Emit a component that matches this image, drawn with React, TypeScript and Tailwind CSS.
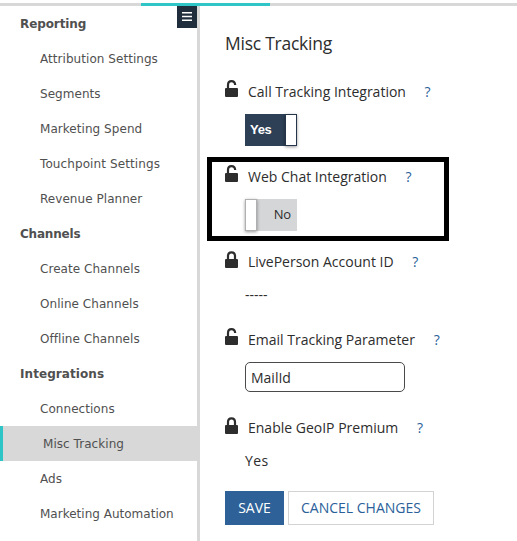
import React from "react";

type NavItem = { label: string; kind: "heading" | "link" | "active"; spacing?: string };

const navItems: NavItem[] = [
  { label: "Reporting", kind: "heading", spacing: "tracking-[-0.1px]" },
  { label: "Attribution Settings", kind: "link" },
  { label: "Segments", kind: "link" },
  { label: "Marketing Spend", kind: "link" },
  { label: "Touchpoint Settings", kind: "link", spacing: "tracking-[0.1px]" },
  { label: "Revenue Planner", kind: "link" },
  { label: "Channels", kind: "heading", spacing: "tracking-[-0.2px]" },
  { label: "Create Channels", kind: "link" },
  { label: "Online Channels", kind: "link" },
  { label: "Offline Channels", kind: "link" },
  { label: "Integrations", kind: "heading", spacing: "tracking-[0.07px]" },
  { label: "Connections", kind: "link" },
  { label: "Misc Tracking", kind: "active" },
  { label: "Ads", kind: "link" },
  { label: "Marketing Automation", kind: "link", spacing: "tracking-[0.01px]" },
];

const navStyles = {
  heading: "pl-5 font-bold",
  link: "pl-10",
  active: "border-l-[3px] border-[#2fc4c6] bg-[#d8d8d8] pl-10",
};

function LockIcon({ open }: { open: boolean }) {
  return (
    <svg width="13" height="17" viewBox="0 0 13 17" className="shrink-0" fill="none">
      <path
        d={open ? "M3 9V5C3 2.6 4.4 1.1 6.5 1.1C8.6 1.1 10 2.4 10.2 5" : "M3 9V5C3 2.8 4.5 1.3 6.5 1.3C8.5 1.3 10 2.8 10 5V9"}
        stroke="#2d2d2d"
        strokeWidth="2.2"
      />
      <rect x="0" y="8" width="13" height="9" rx="1" fill="#2d2d2d" />
    </svg>
  );
}

function FieldLabel({ text, open }: { text: string; open: boolean }) {
  return (
    <div className="flex h-5 items-center">
      <div className="flex h-5 items-start">
        <div className={open ? "-mt-0.5" : "-mt-px"}>
          <LockIcon open={open} />
        </div>
      </div>
      <span className="ml-2.5 text-sm leading-5">{text}</span>
      <span className="ml-[18.7px] text-sm leading-5 text-[#2a6099]">?</span>
    </div>
  );
}

export default function App() {
  return (
    <div className="flex h-[541px] w-[517px] flex-col overflow-hidden bg-white pt-[3px] font-['Open_Sans',sans-serif] text-[#2d2d2d]">
      <div className="flex h-[3px] shrink-0 bg-[#d8d8d8] pl-[141px]">
        <div className="w-[129px] bg-[#2fc4c6]" />
      </div>
      <div className="flex min-h-0 flex-1">
        <nav className="relative w-[200px] shrink-0 border-r-[3px] border-[#d8d8d8] font-['DejaVu_Sans',sans-serif] text-xs text-[#505050]">
          {navItems.map((item) => (
            <div key={item.label} className={`flex h-[35px] items-center whitespace-nowrap ${navStyles[item.kind]}`}>
              <span className={item.spacing ?? "tracking-[0.05px]"}>{item.label}</span>
            </div>
          ))}
          <button className="absolute top-0 right-0 h-[22px] w-5 bg-[#1f2d3d] pl-[5px]" aria-label="Menu">
            <svg width="10" height="22" viewBox="0 0 10 22" className="block" stroke="#fff">
              <path d="M0 6.7H10M0 10.5H10M0 14.3H10" strokeWidth="1.6" />
            </svg>
          </button>
        </nav>
        <main className="min-w-0 flex-1 pt-[25px] pl-[25px]">
          <h1 className="h-6 text-[17.5px] leading-6 tracking-[-0.25px]">Misc Tracking</h1>
          <section className="mt-[27px]">
            <FieldLabel text="Call Tracking Integration" open />
            <div className="mt-3 ml-5 flex h-8 w-[52px] items-center bg-[#2d4056] pl-[5px] font-['Liberation_Sans',sans-serif] text-[13px] font-bold tracking-[-0.3px] text-white">
              <span className="flex-1">Yes</span>
              <span className="h-full w-3 border border-[#26364a] bg-white shadow-[0_1px_3px_rgba(0,0,0,0.4)]" />
            </div>
          </section>
          <section className="relative mt-[21px]">
            <FieldLabel text="Web Chat Integration" open />
            <div className="mt-3 ml-5 flex h-8 w-[52px] items-center bg-[#d5d6d8] pr-1.5 text-[13px] tracking-[-0.2px]">
              <span className="h-full w-3 border border-[#b0b0b0] bg-white shadow-[0_1px_3px_rgba(0,0,0,0.4)]" />
              <span className="flex-1 text-right">No</span>
            </div>
            <div className="absolute -top-2.5 -left-[18px] h-[84px] w-[242px] border-[5px] border-black" />
          </section>
          <section className="mt-[21px]">
            <FieldLabel text="LivePerson Account ID" open={false} />
            <p className="mt-[13px] ml-5 text-sm leading-5">-----</p>
          </section>
          <section className="mt-[25px]">
            <FieldLabel text="Email Tracking Parameter" open />
            <input
              className="mt-3 ml-5 block h-[30px] w-[160px] rounded-[5px] border border-[#4a4a4a] bg-white px-[5px] text-sm"
              defaultValue="MailId"
            />
          </section>
          <section className="mt-[26px]">
            <FieldLabel text="Enable GeoIP Premium" open={false} />
            <p className="mt-[13px] ml-5 text-sm leading-5 tracking-[0.4px]">Yes</p>
          </section>
          <div className="mt-5 flex h-[34px] gap-1 text-sm">
            <button className="w-[59px] bg-[#2d6197] text-white">SAVE</button>
            <button className="w-[146px] border border-[#d3d3d3] bg-white text-[#2a6099]">CANCEL CHANGES</button>
          </div>
        </main>
      </div>
    </div>
  );
}
